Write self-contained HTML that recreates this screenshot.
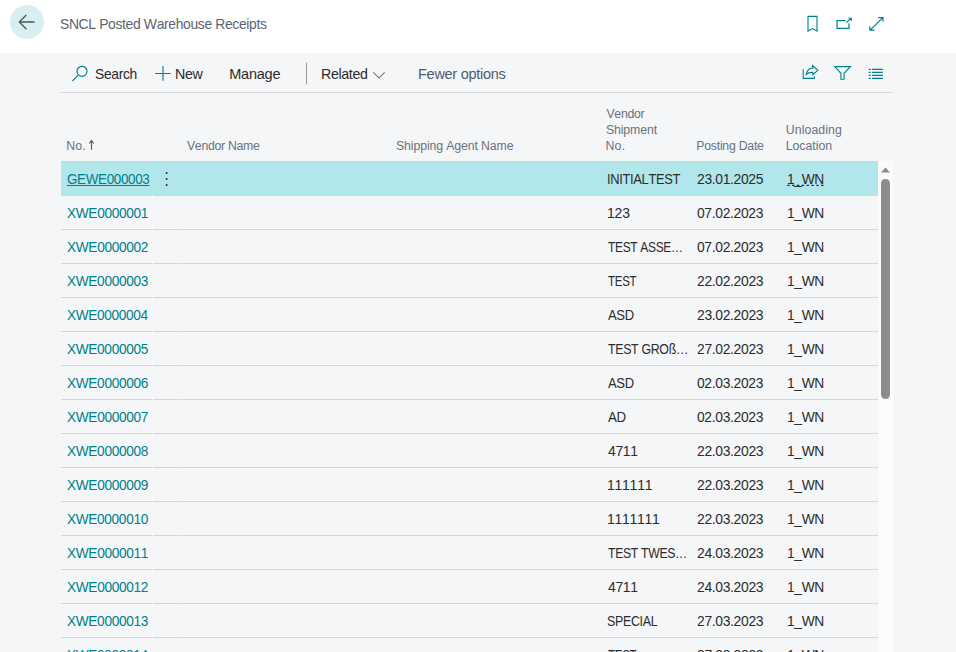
<!DOCTYPE html>
<html><head><meta charset="utf-8"><style>
*{margin:0;padding:0;box-sizing:border-box}
html,body{width:956px;height:652px;overflow:hidden;background:#f5f6f8;font-family:"Liberation Sans",sans-serif}
.hdr{position:absolute;left:0;top:0;width:956px;height:53px;background:#fff}
.back{position:absolute;left:10px;top:5px;width:34px;height:34px;border-radius:50%;background:#d8eff2}
.abs{position:absolute}
.txt{position:absolute;white-space:nowrap;line-height:1;font-kerning:none;transform-origin:0 0}
.tline{position:absolute;left:61px;top:92px;width:832px;height:1px;background:#d8d9db}
.row{position:absolute;left:61px;width:817px;height:33px}
.row.sel{background:#b1e6ea}
.line{position:absolute;left:61px;width:817px;height:1px;background:#d3d6d9}
.gap{position:absolute;width:1px;height:1px;background:#f5f6f8}
.sb{position:absolute;left:878px;top:161px;width:15px;height:491px;background:#fbfbfb}

</style></head><body>
<div class="hdr"></div>
<div class="back"></div>
<div class="tline"></div>
<div class="txt" style="left:60.37px;top:17.03px;font-size:14.5px;letter-spacing:-0.350px;color:#5a6573;transform:scaleX(0.9566)">SNCL Posted Warehouse Receipts</div>
<div class="txt" style="left:94.87px;top:67.03px;font-size:14.5px;letter-spacing:-0.350px;color:#2c2c2c;transform:scaleX(0.9556)">Search</div>
<div class="txt" style="left:174.73px;top:67.03px;font-size:14.5px;letter-spacing:-0.350px;color:#2c2c2c;transform:scaleX(0.9833)">New</div>
<div class="txt" style="left:229.21px;top:67.03px;font-size:14.5px;letter-spacing:-0.213px;color:#2c2c2c">Manage</div>
<div class="txt" style="left:320.54px;top:67.03px;font-size:14.5px;letter-spacing:-0.350px;color:#2c2c2c;transform:scaleX(0.9791)">Related</div>
<div class="txt" style="left:418.01px;top:66.53px;font-size:14.5px;letter-spacing:-0.271px;color:#505c6d">Fewer options</div>
<div class="txt" style="left:66.19px;top:139.79px;font-size:12.3px;letter-spacing:0.196px;color:#6a737d">No.</div>
<div class="txt" style="left:186.95px;top:139.79px;font-size:12.3px;letter-spacing:-0.299px;color:#6a737d">Vendor Name</div>
<div class="txt" style="left:396.04px;top:139.79px;font-size:12.3px;letter-spacing:-0.120px;color:#6a737d">Shipping Agent Name</div>
<div class="txt" style="left:606.45px;top:107.99px;font-size:12.3px;letter-spacing:-0.281px;color:#6a737d">Vendor</div>
<div class="txt" style="left:605.94px;top:123.69px;font-size:12.3px;letter-spacing:-0.116px;color:#6a737d">Shipment</div>
<div class="txt" style="left:605.49px;top:139.59px;font-size:12.3px;letter-spacing:0.246px;color:#6a737d">No.</div>
<div class="txt" style="left:696.29px;top:139.59px;font-size:12.3px;letter-spacing:-0.252px;color:#6a737d">Posting Date</div>
<div class="txt" style="left:785.75px;top:123.69px;font-size:12.3px;letter-spacing:0.094px;color:#6a737d">Unloading</div>
<div class="txt" style="left:785.69px;top:139.59px;font-size:12.3px;letter-spacing:0.001px;color:#6a737d">Location</div>
<div class="line" style="top:161px"></div>
<div class="row sel" style="top:162px"></div>
<div class="line" style="top:195px"></div>
<div class="gap" style="top:195px;left:152px"></div><div class="gap" style="top:195px;left:181px"></div>
<div class="txt" style="left:66.93px;top:171.95px;font-size:14px;letter-spacing:-0.350px;color:#00808a;transform:scaleX(0.9585);text-decoration:underline">GEWE000003</div>
<div class="txt" style="left:606.81px;top:171.95px;font-size:14px;letter-spacing:-0.350px;color:#2c2c2c;transform:scaleX(0.9216)">INITIALTEST</div>
<div class="txt" style="left:697.10px;top:171.95px;font-size:14px;letter-spacing:-0.350px;color:#2c2c2c;transform:scaleX(0.9935)">23.01.2025</div>
<div class="txt" style="left:787.35px;top:171.95px;font-size:14px;letter-spacing:-0.350px;color:#2c2c2c;transform:scaleX(0.9849)">1_WN</div>
<div class="line" style="top:229px"></div>
<div class="gap" style="top:229px;left:152px"></div><div class="gap" style="top:229px;left:181px"></div>
<div class="txt" style="left:67.29px;top:205.95px;font-size:14px;letter-spacing:-0.350px;color:#00808a;transform:scaleX(0.9776)">XWE0000001</div>
<div class="txt" style="left:606.93px;top:205.95px;font-size:14px;letter-spacing:-0.088px;color:#2c2c2c">123</div>
<div class="txt" style="left:697.26px;top:205.95px;font-size:14px;letter-spacing:-0.350px;color:#2c2c2c;transform:scaleX(0.9915)">07.02.2023</div>
<div class="txt" style="left:787.35px;top:205.95px;font-size:14px;letter-spacing:-0.350px;color:#2c2c2c;transform:scaleX(0.9849)">1_WN</div>
<div class="line" style="top:263px"></div>
<div class="gap" style="top:263px;left:152px"></div><div class="gap" style="top:263px;left:181px"></div>
<div class="txt" style="left:67.29px;top:239.95px;font-size:14px;letter-spacing:-0.350px;color:#00808a;transform:scaleX(0.9778)">XWE0000002</div>
<div class="txt" style="left:607.73px;top:239.95px;font-size:14px;letter-spacing:-0.350px;color:#2c2c2c;transform:scaleX(0.8522)">TEST ASSE…</div>
<div class="txt" style="left:697.26px;top:239.95px;font-size:14px;letter-spacing:-0.350px;color:#2c2c2c;transform:scaleX(0.9915)">07.02.2023</div>
<div class="txt" style="left:787.35px;top:239.95px;font-size:14px;letter-spacing:-0.350px;color:#2c2c2c;transform:scaleX(0.9849)">1_WN</div>
<div class="line" style="top:297px"></div>
<div class="gap" style="top:297px;left:152px"></div><div class="gap" style="top:297px;left:181px"></div>
<div class="txt" style="left:67.29px;top:273.95px;font-size:14px;letter-spacing:-0.350px;color:#00808a;transform:scaleX(0.9768)">XWE0000003</div>
<div class="txt" style="left:607.74px;top:273.95px;font-size:14px;letter-spacing:-0.350px;color:#2c2c2c;transform:scaleX(0.8242)">TEST</div>
<div class="txt" style="left:697.10px;top:273.95px;font-size:14px;letter-spacing:-0.350px;color:#2c2c2c;transform:scaleX(0.9939)">22.02.2023</div>
<div class="txt" style="left:787.35px;top:273.95px;font-size:14px;letter-spacing:-0.350px;color:#2c2c2c;transform:scaleX(0.9849)">1_WN</div>
<div class="line" style="top:331px"></div>
<div class="gap" style="top:331px;left:152px"></div><div class="gap" style="top:331px;left:181px"></div>
<div class="txt" style="left:67.29px;top:307.95px;font-size:14px;letter-spacing:-0.350px;color:#00808a;transform:scaleX(0.9743)">XWE0000004</div>
<div class="txt" style="left:607.97px;top:307.95px;font-size:14px;letter-spacing:-0.350px;color:#2c2c2c;transform:scaleX(0.9310)">ASD</div>
<div class="txt" style="left:697.10px;top:307.95px;font-size:14px;letter-spacing:-0.350px;color:#2c2c2c;transform:scaleX(0.9939)">23.02.2023</div>
<div class="txt" style="left:787.35px;top:307.95px;font-size:14px;letter-spacing:-0.350px;color:#2c2c2c;transform:scaleX(0.9849)">1_WN</div>
<div class="line" style="top:365px"></div>
<div class="gap" style="top:365px;left:152px"></div><div class="gap" style="top:365px;left:181px"></div>
<div class="txt" style="left:67.29px;top:341.95px;font-size:14px;letter-spacing:-0.350px;color:#00808a;transform:scaleX(0.9764)">XWE0000005</div>
<div class="txt" style="left:607.72px;top:341.95px;font-size:14px;letter-spacing:-0.350px;color:#2c2c2c;transform:scaleX(0.8823)">TEST GROß…</div>
<div class="txt" style="left:697.10px;top:341.95px;font-size:14px;letter-spacing:-0.350px;color:#2c2c2c;transform:scaleX(0.9939)">27.02.2023</div>
<div class="txt" style="left:787.35px;top:341.95px;font-size:14px;letter-spacing:-0.350px;color:#2c2c2c;transform:scaleX(0.9849)">1_WN</div>
<div class="line" style="top:399px"></div>
<div class="gap" style="top:399px;left:152px"></div><div class="gap" style="top:399px;left:181px"></div>
<div class="txt" style="left:67.29px;top:375.95px;font-size:14px;letter-spacing:-0.350px;color:#00808a;transform:scaleX(0.9768)">XWE0000006</div>
<div class="txt" style="left:607.97px;top:375.95px;font-size:14px;letter-spacing:-0.350px;color:#2c2c2c;transform:scaleX(0.9310)">ASD</div>
<div class="txt" style="left:697.26px;top:375.95px;font-size:14px;letter-spacing:-0.350px;color:#2c2c2c;transform:scaleX(0.9915)">02.03.2023</div>
<div class="txt" style="left:787.35px;top:375.95px;font-size:14px;letter-spacing:-0.350px;color:#2c2c2c;transform:scaleX(0.9849)">1_WN</div>
<div class="line" style="top:433px"></div>
<div class="gap" style="top:433px;left:152px"></div><div class="gap" style="top:433px;left:181px"></div>
<div class="txt" style="left:67.29px;top:409.95px;font-size:14px;letter-spacing:-0.350px;color:#00808a;transform:scaleX(0.9778)">XWE0000007</div>
<div class="txt" style="left:607.97px;top:409.95px;font-size:14px;letter-spacing:-0.350px;color:#2c2c2c;transform:scaleX(0.9510)">AD</div>
<div class="txt" style="left:697.26px;top:409.95px;font-size:14px;letter-spacing:-0.350px;color:#2c2c2c;transform:scaleX(0.9915)">02.03.2023</div>
<div class="txt" style="left:787.35px;top:409.95px;font-size:14px;letter-spacing:-0.350px;color:#2c2c2c;transform:scaleX(0.9849)">1_WN</div>
<div class="line" style="top:467px"></div>
<div class="gap" style="top:467px;left:152px"></div><div class="gap" style="top:467px;left:181px"></div>
<div class="txt" style="left:67.29px;top:443.95px;font-size:14px;letter-spacing:-0.350px;color:#00808a;transform:scaleX(0.9767)">XWE0000008</div>
<div class="txt" style="left:607.68px;top:443.95px;font-size:14px;letter-spacing:-0.350px;color:#2c2c2c;transform:scaleX(0.9969)">4711</div>
<div class="txt" style="left:697.10px;top:443.95px;font-size:14px;letter-spacing:-0.350px;color:#2c2c2c;transform:scaleX(0.9939)">22.03.2023</div>
<div class="txt" style="left:787.35px;top:443.95px;font-size:14px;letter-spacing:-0.350px;color:#2c2c2c;transform:scaleX(0.9849)">1_WN</div>
<div class="line" style="top:501px"></div>
<div class="gap" style="top:501px;left:152px"></div><div class="gap" style="top:501px;left:181px"></div>
<div class="txt" style="left:67.29px;top:477.95px;font-size:14px;letter-spacing:-0.350px;color:#00808a;transform:scaleX(0.9773)">XWE0000009</div>
<div class="txt" style="left:606.93px;top:477.95px;font-size:14px;letter-spacing:-0.233px;color:#2c2c2c">111111</div>
<div class="txt" style="left:697.10px;top:477.95px;font-size:14px;letter-spacing:-0.350px;color:#2c2c2c;transform:scaleX(0.9939)">22.03.2023</div>
<div class="txt" style="left:787.35px;top:477.95px;font-size:14px;letter-spacing:-0.350px;color:#2c2c2c;transform:scaleX(0.9849)">1_WN</div>
<div class="line" style="top:535px"></div>
<div class="gap" style="top:535px;left:152px"></div><div class="gap" style="top:535px;left:181px"></div>
<div class="txt" style="left:67.29px;top:511.95px;font-size:14px;letter-spacing:-0.350px;color:#00808a;transform:scaleX(0.9760)">XWE0000010</div>
<div class="txt" style="left:606.93px;top:511.95px;font-size:14px;letter-spacing:-0.275px;color:#2c2c2c">1111111</div>
<div class="txt" style="left:697.10px;top:511.95px;font-size:14px;letter-spacing:-0.350px;color:#2c2c2c;transform:scaleX(0.9939)">22.03.2023</div>
<div class="txt" style="left:787.35px;top:511.95px;font-size:14px;letter-spacing:-0.350px;color:#2c2c2c;transform:scaleX(0.9849)">1_WN</div>
<div class="line" style="top:569px"></div>
<div class="gap" style="top:569px;left:152px"></div><div class="gap" style="top:569px;left:181px"></div>
<div class="txt" style="left:67.29px;top:545.95px;font-size:14px;letter-spacing:-0.350px;color:#00808a;transform:scaleX(0.9776)">XWE0000011</div>
<div class="txt" style="left:607.73px;top:545.95px;font-size:14px;letter-spacing:-0.350px;color:#2c2c2c;transform:scaleX(0.8722)">TEST TWES…</div>
<div class="txt" style="left:697.10px;top:545.95px;font-size:14px;letter-spacing:-0.350px;color:#2c2c2c;transform:scaleX(0.9939)">24.03.2023</div>
<div class="txt" style="left:787.35px;top:545.95px;font-size:14px;letter-spacing:-0.350px;color:#2c2c2c;transform:scaleX(0.9849)">1_WN</div>
<div class="line" style="top:603px"></div>
<div class="gap" style="top:603px;left:152px"></div><div class="gap" style="top:603px;left:181px"></div>
<div class="txt" style="left:67.29px;top:579.95px;font-size:14px;letter-spacing:-0.350px;color:#00808a;transform:scaleX(0.9778)">XWE0000012</div>
<div class="txt" style="left:607.68px;top:579.95px;font-size:14px;letter-spacing:-0.350px;color:#2c2c2c;transform:scaleX(0.9969)">4711</div>
<div class="txt" style="left:697.10px;top:579.95px;font-size:14px;letter-spacing:-0.350px;color:#2c2c2c;transform:scaleX(0.9939)">24.03.2023</div>
<div class="txt" style="left:787.35px;top:579.95px;font-size:14px;letter-spacing:-0.350px;color:#2c2c2c;transform:scaleX(0.9849)">1_WN</div>
<div class="line" style="top:637px"></div>
<div class="gap" style="top:637px;left:152px"></div><div class="gap" style="top:637px;left:181px"></div>
<div class="txt" style="left:67.29px;top:613.95px;font-size:14px;letter-spacing:-0.350px;color:#00808a;transform:scaleX(0.9768)">XWE0000013</div>
<div class="txt" style="left:607.44px;top:613.95px;font-size:14px;letter-spacing:-0.350px;color:#2c2c2c;transform:scaleX(0.8867)">SPECIAL</div>
<div class="txt" style="left:697.10px;top:613.95px;font-size:14px;letter-spacing:-0.350px;color:#2c2c2c;transform:scaleX(0.9939)">27.03.2023</div>
<div class="txt" style="left:787.35px;top:613.95px;font-size:14px;letter-spacing:-0.350px;color:#2c2c2c;transform:scaleX(0.9849)">1_WN</div>
<div class="line" style="top:671px"></div>
<div class="gap" style="top:671px;left:152px"></div><div class="gap" style="top:671px;left:181px"></div>
<div class="txt" style="left:67.29px;top:647.95px;font-size:14px;letter-spacing:-0.350px;color:#00808a;transform:scaleX(0.9743)">XWE0000014</div>
<div class="txt" style="left:607.74px;top:647.95px;font-size:14px;letter-spacing:-0.350px;color:#2c2c2c;transform:scaleX(0.8242)">TEST</div>
<div class="txt" style="left:697.10px;top:647.95px;font-size:14px;letter-spacing:-0.350px;color:#2c2c2c;transform:scaleX(0.9939)">27.03.2023</div>
<div class="txt" style="left:787.35px;top:647.95px;font-size:14px;letter-spacing:-0.350px;color:#2c2c2c;transform:scaleX(0.9849)">1_WN</div>
<div class="sb"></div>
<svg class="abs" style="left:0;top:0" width="956" height="652">
  <g fill="none" stroke="#4f5555" stroke-width="1.3" stroke-linecap="round" stroke-linejoin="round">
    <path d="M34 22 H19.3 M26 15.3 L19.3 22 L26 28.7"/>
  </g>
  <g fill="none" stroke="#00808a" stroke-width="1.2">
    <path d="M808 31 V16.4 H817 V31 L812.5 28.6 Z" stroke-width="1.1"/>
    <path d="M845.7 20.6 H837 V28.4 H849 V23.3 M846.3 22.6 L850.4 18.9"/>
    <path d="M848 17.8 H851.8 V21.3 Z" fill="#00808a" stroke="none"/>
    <path d="M870.4 29.9 L882.9 17.6 M878.3 17.6 H883 V21.6 M869.9 26.2 V30.2 H874.6"/>
  </g>
  <g fill="none" stroke="#00808a" stroke-width="1.15">
    <circle cx="82" cy="71.3" r="5"/>
    <path d="M72.3 81.2 L78.3 75.2"/>
    <path d="M163 66 V80.7 M155.2 73.5 H170.6"/>
  </g>
  <path d="M306.5 62.5 V84.5" stroke="#9a9a9a" stroke-width="1"/>
  <path d="M373.3 72.3 L379 78 L384.7 72.3" fill="none" stroke="#777" stroke-width="1.1"/>
  <g fill="none" stroke="#00808a" stroke-width="1.1">
    <path d="M803.2 69.2 V78.4 H814.4 V76.2"/>
    <path d="M806.3 74.3 C807 70.2 809 68.1 812.7 68.1 V65.6 L817.8 70.3 L812.9 74.7 V72.4 C810 72.2 808 72.6 806.3 74.3 Z" stroke-linejoin="miter"/>
    <path d="M834.8 66.6 H850.4 L844.1 73.3 V79.3 H840.9 V73.3 Z"/>
  </g>
  <g fill="none" stroke="#00808a" stroke-width="1.2">
    <path d="M871.9 69.4 H882.9 M871.9 72.4 H882.9 M871.9 75.4 H882.9 M871.9 78.4 H882.9"/>
    <path d="M868.7 69.4 H870.7 M868.7 72.4 H870.7 M868.7 75.4 H870.7 M868.7 78.4 H870.7"/>
  </g>
  <path d="M91.5 140.6 V149.8 M89.3 143.5 L91.5 140.6 L93.7 143.5" fill="none" stroke="#606060" stroke-width="1.2"/>
  <g fill="#222">
    <circle cx="166.6" cy="173" r="0.95"/><circle cx="166.6" cy="179" r="0.95"/><circle cx="166.6" cy="185" r="0.95"/>
  </g>
  <path d="M881 172.6 L885.5 167.6 L890 172.6 Z" fill="#8a8a8a"/>
  <rect x="881" y="179" width="9" height="220" rx="4.5" fill="#8c8c8c"/>
  <path d="M787.2 185.4 H824" stroke="#333" stroke-width="1.3" stroke-dasharray="2.5 2.33"/>
</svg>
</body></html>
